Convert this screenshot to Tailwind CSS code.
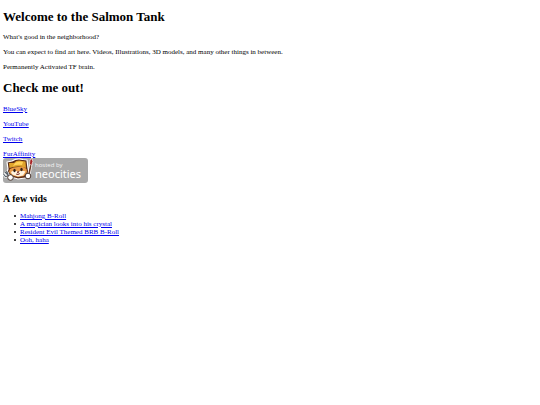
<!DOCTYPE html>
<html lang="en">
<head>
  <meta charset="UTF-8">
  <meta name="viewport" content="width=device-width, initial-scale=1.0">
  <title>The Salmon Tank</title>
  <script src="https://cdn.jsdelivr.net/npm/@tailwindcss/browser@4"></script>
</head>
<body class="bg-white text-black font-['Liberation_Serif',serif] text-[7px] leading-[8px] px-[3px] pt-[9px]">
  <h1 class="text-[13px] leading-4 font-bold">Welcome to the Salmon Tank</h1>
  <div class="mt-2 flex flex-col gap-[7px]">
    <p>What's good in the neighborhood?</p>
    <p>You can expect to find art here. Videos, Illustrations, 3D models, and many other things in between.</p>
    <p>Permanently Activated TF brain.</p>
  </div>

  <h1 class="mt-[9px] text-[13px] leading-4 font-bold">Check me out!</h1>
  <div class="mt-[9px] flex flex-col items-start gap-[7px] text-[#0000ee] underline">
    <a href="#bluesky">BlueSky</a>
    <a href="#youtube">YouTube</a>
    <a href="#twitch">Twitch</a>
    <a href="#furaffinity">FurAffinity</a>
  </div>

  <!-- Neocities badge -->
  <a href="#neocities" class="block w-[85px]" aria-label="hosted by neocities">
    <svg class="block" width="85" height="25" viewBox="0 0 85 25">
      <rect width="85" height="25" rx="3" fill="#a9a9a9"/>
      <!-- cat -->
      <path d="M5 11 4 4 9 3Q14-.5 20 1.500L24 2 25 10 26 15 22 20 15 21 8 19 4 14Z" fill="#5b2c17" stroke="#fff" stroke-width="1.200" stroke-linejoin="round"/>
      <path d="M6.500 10 6 5 11 5Q14 1.500 19 3L22.500 3.500 23 10Q19 8 15 8.500Q10 8.500 6.500 10Z" fill="#e0a32c"/>
      <path d="M12 5Q15 2.500 20 4L19 7Q14 6 10 8Z" fill="#ffd35a"/>
      <path d="M7 11Q10 9 15 9Q21 8 23.500 11L24 14 21 18 15 19 9 17.500 6 14Z" fill="#e99b48"/>
      <path d="M8 14Q11 12 15 13.500Q19 12 22.500 13.500L20 17.500 15 18.500 9 16.500Z" fill="#fff3de"/>
      <ellipse cx="11.500" cy="12.500" rx="1.200" ry="1.800" fill="#32201b"/>
      <ellipse cx="18.500" cy="11.500" rx="1.200" ry="1.800" fill="#32201b"/>
      <path d="m14 14 2-.5-1 1.500ZM13 16q2 1.500 4-.5" fill="#9c3429" stroke="#713022" stroke-width=".7"/>
      <!-- fork and brush -->
      <path d="M2 14 7 19M.5 16l2 2.500 2-.5.5-2-1.500-3" fill="none" stroke="#fff" stroke-width="2.500"/>
      <path d="M2 14 7 19M.5 16l2 2.500 2-.5.5-2-1.500-3" fill="none" stroke="#586169" stroke-width="1.200"/>
      <path d="M28 6 26 16" stroke="#fff" stroke-width="3"/>
      <path d="M28 6 26 16" stroke="#6b3a25" stroke-width="1.500"/>
      <path d="m26.500 6 .5-4 2-1.500.8 3-1.300 4Z" fill="#a62022" stroke="#fff" stroke-width=".6"/>
      <circle cx="7.500" cy="19.500" r="2.800" fill="#fff" stroke="#4d3930"/>
      <circle cx="25" cy="18" r="2.800" fill="#fff" stroke="#4d3930"/>
      <text x="32" y="9" font-family="Open Sans, sans-serif" font-size="6" fill="#f4f4f4">hosted by</text>
      <text x="32" y="20" font-family="Noto Sans, sans-serif" font-size="11" fill="#fff">neocities</text>
    </svg>
  </a>

  <h2 class="mt-[10px] text-[10px] leading-3 font-bold">A few vids</h2>
  <ul class="mt-[7px] pl-[11px]">
    <li class="flex items-center gap-1 before:size-0.5 before:rounded-full before:bg-black"><a href="#mahjong" class="text-[#0000ee] underline">Mahjong B-Roll</a></li>
    <li class="flex items-center gap-1 before:size-0.5 before:rounded-full before:bg-black"><a href="#magician" class="text-[#0000ee] underline">A magician looks into his crystal</a></li>
    <li class="flex items-center gap-1 before:size-0.5 before:rounded-full before:bg-black"><a href="#resident-evil" class="text-[#0000ee] underline">Resident Evil Themed BRB B-Roll</a></li>
    <li class="flex items-center gap-1 before:size-0.5 before:rounded-full before:bg-black"><a href="#ooh-haha" class="text-[#0000ee] underline">Ooh, haha</a></li>
  </ul>
</body>
</html>
